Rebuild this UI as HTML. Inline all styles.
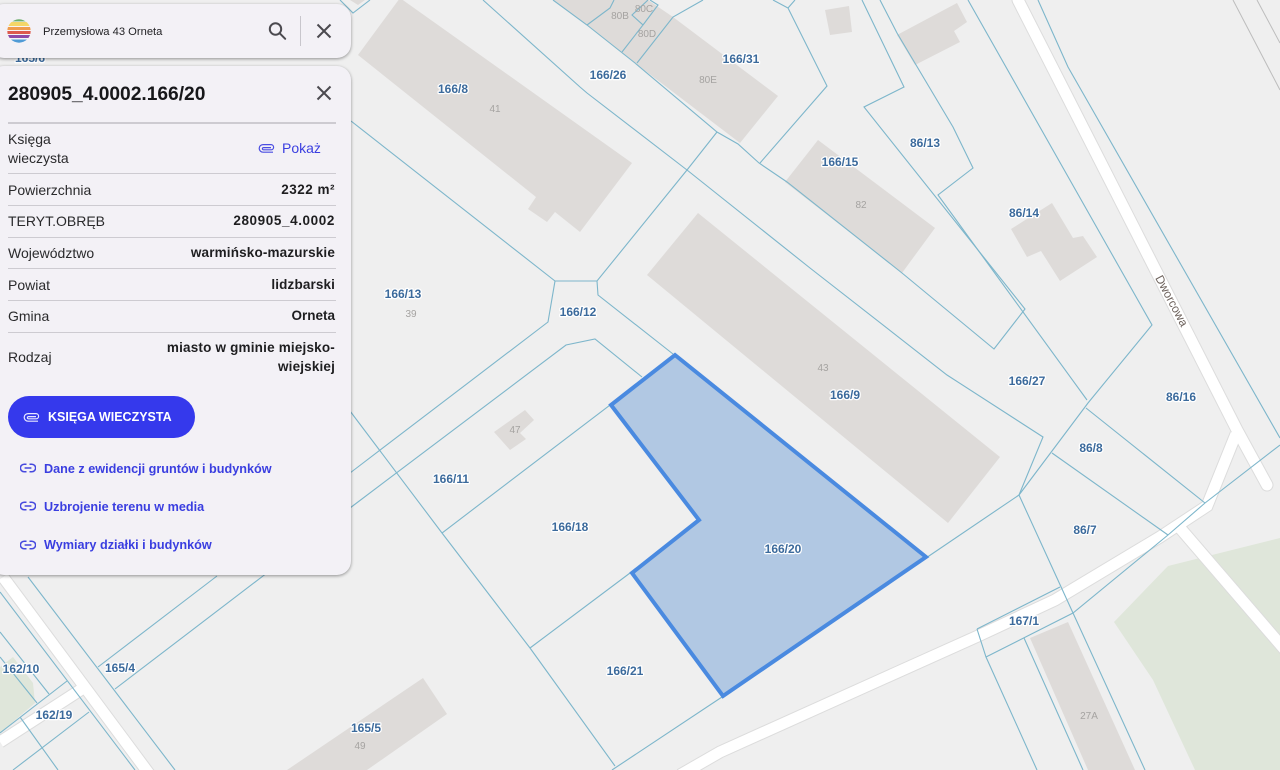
<!DOCTYPE html>
<html lang="pl"><head><meta charset="utf-8"><title>Działka 166/20</title>
<style>
html,body{margin:0;padding:0;width:1280px;height:770px;overflow:hidden;background:#efefef;font-family:"Liberation Sans",sans-serif}
svg.map{position:absolute;left:0;top:0}
.lab{font:bold 12px "Liberation Sans",sans-serif;fill:#3b6a9c;stroke:#fff;stroke-width:2.5px;paint-order:stroke;stroke-linejoin:round;text-anchor:middle}
.num{font:10px "Liberation Sans",sans-serif;fill:#a5a3a1;text-anchor:middle}
.panel{position:absolute;left:-10px;width:361px;background:#f3f1f6;border-radius:14px;box-shadow:0 1px 3px rgba(0,0,0,.4)}
.t{position:absolute;white-space:nowrap;color:#2a2a2c;font-size:14px;line-height:20px}
.b{font-weight:bold;color:#1e1e20;right:945px;text-align:right;font-size:13.5px}
.hr{position:absolute;left:8px;width:328px;height:1px;background:#cdcbd1}
.lnk{position:absolute;left:44px;color:#3a3ee0;font-weight:bold;font-size:12.65px;line-height:20px;white-space:nowrap}
svg.i{position:absolute}
</style></head><body>
<svg class="map" width="1280" height="770" viewBox="0 0 1280 770">
<rect width="1280" height="770" fill="#efefef"/>
<g fill="#dfe6da">
<path d="M1280,538L1168,566L1114,622L1153,680L1195,770L1280,770Z"/>
<path d="M0,667L13,657L33,683L35,703L0,733Z"/>
</g>
<g fill="#dedbd9">
<path d="M358,55L400,-2L632,163L580,232L555,212L547,222L528,209L536,197Z"/>
<path d="M553,0L648,0L673,17L778,96L740,143L635,63L587,25Z"/>
<path d="M818,140L935,228L902,273L785,182Z"/>
<path d="M698,213L647,275L948,523L1000,457Z"/>
<path d="M1052,203L1073,238L1083,236L1097,257L1060,281L1041,251L1027,257L1011,229Z"/>
<path d="M825,10L849,6L852,32L830,35Z"/>
<path d="M957,3L967,22L954,31L960,42L915,65L897,35Z"/>
<path d="M1030,638L1068,622L1135,770L1088,770Z"/>
<path d="M525,410L534,420L520,433L526,439L510,450L494,432Z"/>
<path d="M287,770L423,678L447,714L367,770Z"/>
<path d="M350,0L365,0L358,5Z"/>
</g>
<g fill="none" stroke="#dcdcdc" stroke-width="13">
<path d="M1018,0L1237,430L1267,485" stroke-linecap="round"/>
<path d="M680,775L720,752L880,680L978,636L1055,600L1160,537L1207,506L1236,434"/>
<path d="M1180,528L1285,650"/>
<path d="M3,577L150,775"/>
<path d="M85,687L0,742"/>
</g>
<g fill="none" stroke="#fff" stroke-width="11">
<path d="M1018,0L1237,430L1267,485" stroke-linecap="round"/>
<path d="M680,775L720,752L880,680L978,636L1055,600L1160,537L1207,506L1236,434"/>
<path d="M1180,528L1285,650"/>
<path d="M3,577L150,775"/>
<path d="M85,687L0,742"/>
</g>
<g fill="none" stroke="#bdbdbd" stroke-width="1">
<path d="M1233,0L1280,90M1257,0L1280,43"/>
</g>
<path d="M675,355L926,557L723,696L632,573L699,520L611,405Z" fill="#b1c8e3"/>
<g fill="none" stroke="#7db6cb" stroke-width="1.1">
<path d="M483,0L580,87L587,93L687,170L810,268L947,375L1043,437L1019,495"/>
<path d="M553,0L587,25L635,63L717,132L738,144L759,163L787,182L902,273L994,349L1025,309L864,107L904,87L862,0"/>
<path d="M880,0L897,33L953,127L973,168L938,195L1087,400"/>
<path d="M968,0L1152,325L1088,403L1019,495"/>
<path d="M1052,453L1168,535M1086,408L1205,503"/>
<path d="M1019,495L1073,613L1145,770M926,558L1019,495"/>
<path d="M977,629L1060,587M986,657L1073,613L1168,535L1205,503L1280,445"/>
<path d="M977,629L986,657L1037,770M1024,638L1083,770"/>
<path d="M1038,0L1068,67L1280,438"/>
<path d="M773,0L788,8L827,86L760,163M788,8L795,0"/>
<path d="M717,132L687,170L597,281L555,281L351,121M597,281L598,295L673,354"/>
<path d="M555,281L548,322L350,473L300,510"/>
<path d="M642,377L595,339L566,345L350,508L263,576"/>
<path d="M350,411L442,533L530,648L615,766M442,533L610,405M530,648L630,573M612,770L722,697"/>
<path d="M28,577L175,770M0,592L135,770M98,667L217,576M115,689L263,576"/>
<path d="M0,632L49,694M0,657L37,703M67,681L0,733M20,717L58,770M89,712L13,770"/>
<path d="M587,25L610,8L614,0M622,52L643,25L632,15L648,0M643,25L658,5L650,0M637,63L673,17L703,0"/>
<path d="M340,0L353,13L370,0"/>
</g>
<path d="M675,355L926,557L723,696L632,573L699,520L611,405Z" fill="none" stroke="#4a8ae0" stroke-width="4"/>
<g class="n">
<text class="num" x="495" y="112">41</text><text class="num" x="620" y="19">80B</text><text class="num" x="644" y="12">80C</text><text class="num" x="647" y="37">80D</text><text class="num" x="708" y="83">80E</text><text class="num" x="861" y="208">82</text><text class="num" x="823" y="371">43</text><text class="num" x="411" y="317">39</text><text class="num" x="515" y="433">47</text><text class="num" x="360" y="749">49</text><text class="num" x="1089" y="719">27A</text>
</g>
<g>
<text class="lab" x="453" y="93">166/8</text><text class="lab" x="608" y="79">166/26</text><text class="lab" x="741" y="63">166/31</text><text class="lab" x="840" y="166">166/15</text><text class="lab" x="925" y="147">86/13</text><text class="lab" x="1024" y="217">86/14</text><text class="lab" x="403" y="298">166/13</text><text class="lab" x="578" y="316">166/12</text><text class="lab" x="845" y="399">166/9</text><text class="lab" x="1027" y="385">166/27</text><text class="lab" x="1181" y="401">86/16</text><text class="lab" x="1091" y="452">86/8</text><text class="lab" x="1085" y="534">86/7</text><text class="lab" x="1024" y="625">167/1</text><text class="lab" x="451" y="483">166/11</text><text class="lab" x="570" y="531">166/18</text><text class="lab" x="783" y="553">166/20</text><text class="lab" x="625" y="675">166/21</text><text class="lab" x="120" y="672">165/4</text><text class="lab" x="21" y="673">162/10</text><text class="lab" x="54" y="719">162/19</text><text class="lab" x="366" y="732">165/5</text><text class="lab" x="30" y="62">165/6</text>
</g>
<text x="1155" y="278" transform="rotate(62 1155 278)" font-family="Liberation Sans" font-size="12" fill="#6d625c" stroke="#fff" stroke-width="2" paint-order="stroke">Dworcowa</text>
</svg>

<div class="panel" style="top:4px;height:54px"></div>
<svg class="i" style="left:7px;top:19px" width="24" height="24" viewBox="0 0 24 24">
<defs><clipPath id="c"><circle cx="12" cy="12" r="11.7"/></clipPath></defs>
<g clip-path="url(#c)">
<rect width="24" height="24" fill="#f6f4f4"/>
<rect y="0" width="24" height="2.4" fill="#6dae6c"/><rect y="3" width="24" height="4" fill="#f4d667"/><rect y="8" width="24" height="3" fill="#ef9c4d"/><rect y="12" width="24" height="3" fill="#dd5a4d"/><rect y="16" width="24" height="3" fill="#8d4aa7"/><rect y="20.5" width="24" height="3.5" fill="#4f9bd6"/>
</g></svg>
<div class="t" style="left:43px;top:21.5px;font-size:11.2px;color:#1f1f22">Przemysłowa 43 Orneta</div>
<svg class="i" style="left:264.5px;top:19px" width="24" height="24" viewBox="0 0 24 24" fill="none" stroke="#4b4a4f" stroke-width="2"><circle cx="10.5" cy="10" r="5.7"/><path d="M14.6 14.2L20.2 19.8" stroke-linecap="round"/></svg>
<div style="position:absolute;left:300px;top:16px;width:1px;height:30px;background:#c8c6cc"></div>
<svg class="i" style="left:312px;top:19px" width="24" height="24" viewBox="0 0 24 24" fill="none" stroke="#4b4a4f" stroke-width="2"><path d="M5.5 5.5L18.5 18.5M18.5 5.5L5.5 18.5"/></svg>

<div class="panel" style="top:66px;height:509px"></div>
<div class="t" style="left:8px;top:82.5px;font-size:19.2px;line-height:23px;font-weight:bold;color:#17171a">280905_4.0002.166/20</div>
<svg class="i" style="left:312px;top:81px" width="24" height="24" viewBox="0 0 24 24" fill="none" stroke="#4b4a4f" stroke-width="2"><path d="M5.5 5.5L18.5 18.5M18.5 5.5L5.5 18.5"/></svg>

<div class="hr" style="top:122px;height:2px"></div>
<div class="t" style="left:8px;top:129px">Księga</div>
<div class="t" style="left:8px;top:148px">wieczysta</div>
<svg class="i" style="left:258px;top:141px" width="17" height="14" viewBox="0 0 17 14" fill="none" stroke="#4a4de2" stroke-width="1.2"><path d="M15 11.2H5a3.8 3.8 0 0 1 0-7.6H13a2.6 2.6 0 0 1 0 5.2H5.5a1.1 1.1 0 0 1 0-2.2H13"/></svg>
<div class="t" style="left:282px;top:138px;color:#3a3ee0">Pokaż</div>
<div class="hr" style="top:173px"></div>
<div class="t" style="left:8px;top:180px">Powierzchnia</div><div class="t b" style="top:180px;letter-spacing:.5px">2322 m²</div>
<div class="hr" style="top:205px"></div>
<div class="t" style="left:8px;top:211px">TERYT.OBRĘB</div><div class="t b" style="top:211px;letter-spacing:.6px">280905_4.0002</div>
<div class="hr" style="top:237px"></div>
<div class="t" style="left:8px;top:243px">Województwo</div><div class="t b" style="top:243px;letter-spacing:.16px">warmińsko-mazurskie</div>
<div class="hr" style="top:268px"></div>
<div class="t" style="left:8px;top:275px">Powiat</div><div class="t b" style="top:275px;letter-spacing:.13px">lidzbarski</div>
<div class="hr" style="top:300px"></div>
<div class="t" style="left:8px;top:306px">Gmina</div><div class="t b" style="top:306px">Orneta</div>
<div class="hr" style="top:332px"></div>
<div class="t" style="left:8px;top:347px">Rodzaj</div>
<div class="t b" style="top:338px;letter-spacing:.19px">miasto w gminie miejsko-</div>
<div class="t b" style="top:357px;letter-spacing:.16px">wiejskiej</div>

<div style="position:absolute;left:8px;top:396px;width:187px;height:42px;border-radius:21px;background:#3539ec"></div>
<svg class="i" style="left:23px;top:410px" width="17" height="14" viewBox="0 0 17 14" fill="none" stroke="#e8e8ff" stroke-width="1.2"><path d="M15 11.2H5a3.8 3.8 0 0 1 0-7.6H13a2.6 2.6 0 0 1 0 5.2H5.5a1.1 1.1 0 0 1 0-2.2H13"/></svg>
<div class="t" style="left:48px;top:407px;color:#fff;font-weight:bold;font-size:12.5px">KSIĘGA WIECZYSTA</div>

<svg class="i" style="left:20px;top:462px" width="16" height="12" viewBox="0 0 16 12" fill="none" stroke="#4649de" stroke-width="1.5"><path d="M6.5 2.2H4.2a3.8 3.8 0 0 0 0 7.6h2.3M9.5 2.2h2.3a3.8 3.8 0 0 1 0 7.6H9.5M4.6 6h6.8"/></svg>
<div class="lnk" style="top:458.5px">Dane z ewidencji gruntów i budynków</div>
<svg class="i" style="left:20px;top:500px" width="16" height="12" viewBox="0 0 16 12" fill="none" stroke="#4649de" stroke-width="1.5"><path d="M6.5 2.2H4.2a3.8 3.8 0 0 0 0 7.6h2.3M9.5 2.2h2.3a3.8 3.8 0 0 1 0 7.6H9.5M4.6 6h6.8"/></svg>
<div class="lnk" style="top:496.5px">Uzbrojenie terenu w media</div>
<svg class="i" style="left:20px;top:539px" width="16" height="12" viewBox="0 0 16 12" fill="none" stroke="#4649de" stroke-width="1.5"><path d="M6.5 2.2H4.2a3.8 3.8 0 0 0 0 7.6h2.3M9.5 2.2h2.3a3.8 3.8 0 0 1 0 7.6H9.5M4.6 6h6.8"/></svg>
<div class="lnk" style="top:535px">Wymiary działki i budynków</div>
</body></html>
